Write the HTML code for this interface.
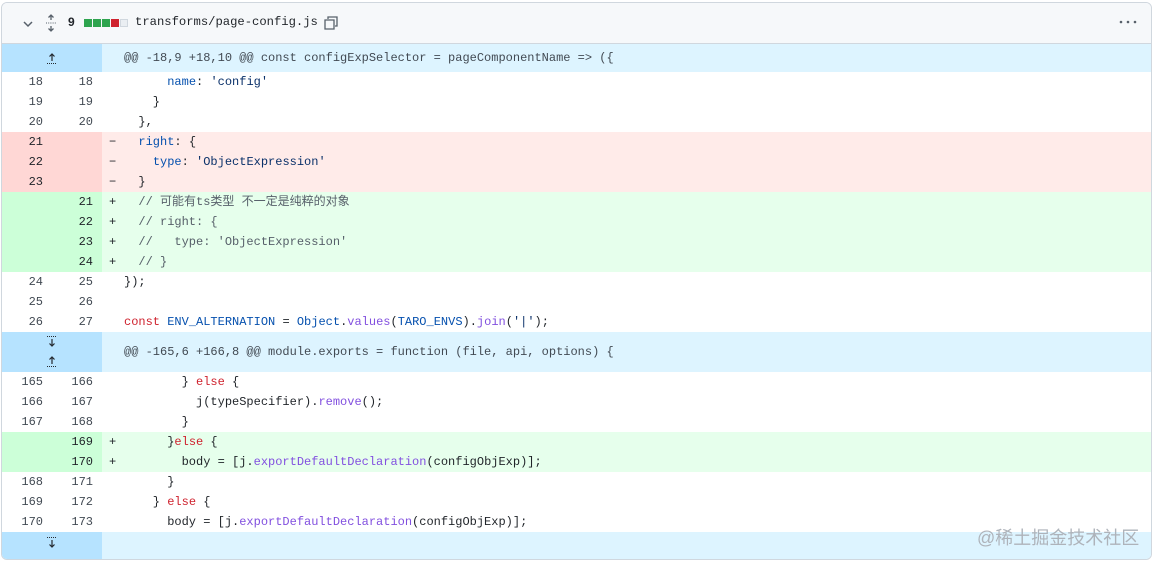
<!DOCTYPE html>
<html><head><meta charset="utf-8"><style>
*{margin:0;padding:0;box-sizing:border-box}
body{width:1155px;height:564px;background:#fff;position:relative;overflow:hidden;font-family:"Liberation Mono","Noto Sans CJK SC",monospace;font-size:12px;color:#1f2328}
.card{position:absolute;left:1px;top:2px;width:1151px;height:558px;border:1px solid #d0d7de;border-radius:6px;overflow:hidden}
.hdr{position:absolute;left:0;top:0;width:100%;height:41px;background:#f6f8fa;border-bottom:1px solid #d0d7de}
.row{position:absolute;left:0;width:100%;height:20px;line-height:20px;white-space:pre}
.n1,.n2{position:absolute;top:0;width:50px;height:100%;text-align:right;color:#424a53;padding-right:9px}
.n1{left:0}.n2{left:50px}
.m{position:absolute;left:107px;top:0}
.c{position:absolute;left:122px;top:0}
.del{background:#ffebe9}.del .n1,.del .n2{background:#ffd7d5;color:#1f2328}
.add{background:#e6ffec}.add .n1,.add .n2{background:#ccffd8;color:#1f2328}
.hunk{background:#ddf4ff;color:#424a53}
.hg{position:absolute;left:0;top:0;width:100px;height:100%;background:#b6e3ff}
.k{color:#cf222e}.s{color:#0a3069}.p{color:#0550ae}.f{color:#8250df}.cm{color:#57606a}
</style></head><body>
<div class="card">
<div class="hdr">
<svg style="position:absolute;left:20px;top:15px" width="12" height="12" viewBox="0 0 12 12"><path d="M2 4l4 4 4-4" fill="none" stroke="#57606a" stroke-width="1.5"/></svg>
<svg style="position:absolute;left:43px;top:10px" width="12" height="20" viewBox="0 0 12 20"><path d="M6 2v5M3.5 4.5L6 2l2.5 2.5M6 18v-5M3.5 15.5L6 18l2.5-2.5" fill="none" stroke="#57606a" stroke-width="1.3"/><path d="M1 10h10" stroke="#57606a" stroke-dasharray="1 1.2"/></svg>
<span style="position:absolute;left:66px;top:12px;font-family:'Liberation Sans',sans-serif;font-weight:bold;font-size:12px;color:#1f2328">9</span>
<div style="position:absolute;left:82px;top:16px;display:flex;gap:1px">
<i style="width:8px;height:8px;background:#2da44e"></i><i style="width:8px;height:8px;background:#2da44e"></i><i style="width:8px;height:8px;background:#2da44e"></i><i style="width:8px;height:8px;background:#cf222e"></i><i style="width:8px;height:8px;background:#eaeef2;border:1px solid #d0d7de"></i></div>
<span style="position:absolute;left:133px;top:12px;font-size:12.2px">transforms/page-config.js</span>
<svg style="position:absolute;left:321px;top:12px" width="16" height="16" viewBox="0 0 16 16"><path d="M5 4V2h9v9h-2M2 5h9v9H2z" fill="none" stroke="#57606a" stroke-width="1.3"/></svg>
<svg style="position:absolute;left:1117px;top:17px" width="18" height="4"><circle cx="2" cy="2" r="1.3" fill="#57606a"/><circle cx="9" cy="2" r="1.3" fill="#57606a"/><circle cx="16" cy="2" r="1.3" fill="#57606a"/></svg>
</div>
<div class="row hunk" style="top:41px;height:28px;line-height:28px"><div class="hg"><svg style="position:absolute;left:44px;top:6px" width="12" height="16"><path d="M6 11V4M3.5 6.5L6 4l2.5 2.5" fill="none" stroke="#24292f" stroke-width="1.2"/><path d="M1 13.5h10" stroke="#24292f" stroke-dasharray="1 1"/></svg></div><span class="c">@@ -18,9 +18,10 @@ const configExpSelector = pageComponentName => ({</span></div>
<div class="row" style="top:69px"><span class="n1">18</span><span class="n2">18</span><span class="c">      <span class="p">name</span>: <span class="s">'config'</span></span></div>
<div class="row" style="top:89px"><span class="n1">19</span><span class="n2">19</span><span class="c">    }</span></div>
<div class="row" style="top:109px"><span class="n1">20</span><span class="n2">20</span><span class="c">  },</span></div>
<div class="row del" style="top:129px"><span class="n1">21</span><span class="n2"></span><span class="m">−</span><span class="c">  <span class="p">right</span>: {</span></div>
<div class="row del" style="top:149px"><span class="n1">22</span><span class="n2"></span><span class="m">−</span><span class="c">    <span class="p">type</span>: <span class="s">'ObjectExpression'</span></span></div>
<div class="row del" style="top:169px"><span class="n1">23</span><span class="n2"></span><span class="m">−</span><span class="c">  }</span></div>
<div class="row add" style="top:189px"><span class="n1"></span><span class="n2">21</span><span class="m">+</span><span class="c cm">  // 可能有ts类型 不一定是纯粹的对象</span></div>
<div class="row add" style="top:209px"><span class="n1"></span><span class="n2">22</span><span class="m">+</span><span class="c cm">  // right: {</span></div>
<div class="row add" style="top:229px"><span class="n1"></span><span class="n2">23</span><span class="m">+</span><span class="c cm">  //   type: 'ObjectExpression'</span></div>
<div class="row add" style="top:249px"><span class="n1"></span><span class="n2">24</span><span class="m">+</span><span class="c cm">  // }</span></div>
<div class="row" style="top:269px"><span class="n1">24</span><span class="n2">25</span><span class="c">});</span></div>
<div class="row" style="top:289px"><span class="n1">25</span><span class="n2">26</span><span class="c"></span></div>
<div class="row" style="top:309px"><span class="n1">26</span><span class="n2">27</span><span class="c"><span class="k">const</span> <span class="p">ENV_ALTERNATION</span> = <span class="p">Object</span>.<span class="f">values</span>(<span class="p">TARO_ENVS</span>).<span class="f">join</span>(<span class="s">'|'</span>);</span></div>
<div class="row hunk" style="top:329px;height:40px;line-height:40px"><div class="hg"><svg style="position:absolute;left:44px;top:3px" width="12" height="34"><path d="M1 1.5h10" stroke="#24292f" stroke-dasharray="1 1"/><path d="M6 4v7M3.5 8.5L6 11l2.5-2.5" fill="none" stroke="#24292f" stroke-width="1.2"/><path d="M6 29v-7M3.5 24.5L6 22l2.5 2.5" fill="none" stroke="#24292f" stroke-width="1.2"/><path d="M1 31.5h10" stroke="#24292f" stroke-dasharray="1 1"/></svg></div><span class="c">@@ -165,6 +166,8 @@ module.exports = function (file, api, options) {</span></div>
<div class="row" style="top:369px"><span class="n1">165</span><span class="n2">166</span><span class="c">        } <span class="k">else</span> {</span></div>
<div class="row" style="top:389px"><span class="n1">166</span><span class="n2">167</span><span class="c">          j(typeSpecifier).<span class="f">remove</span>();</span></div>
<div class="row" style="top:409px"><span class="n1">167</span><span class="n2">168</span><span class="c">        }</span></div>
<div class="row add" style="top:429px"><span class="n1"></span><span class="n2">169</span><span class="m">+</span><span class="c">      }<span class="k">else</span> {</span></div>
<div class="row add" style="top:449px"><span class="n1"></span><span class="n2">170</span><span class="m">+</span><span class="c">        body = [j.<span class="f">exportDefaultDeclaration</span>(configObjExp)];</span></div>
<div class="row" style="top:469px"><span class="n1">168</span><span class="n2">171</span><span class="c">      }</span></div>
<div class="row" style="top:489px"><span class="n1">169</span><span class="n2">172</span><span class="c">    } <span class="k">else</span> {</span></div>
<div class="row" style="top:509px"><span class="n1">170</span><span class="n2">173</span><span class="c">      body = [j.<span class="f">exportDefaultDeclaration</span>(configObjExp)];</span></div>
<div class="row hunk" style="top:529px;height:30px"><div class="hg"><svg style="position:absolute;left:44px;top:4px" width="12" height="16"><path d="M1 1.5h10" stroke="#24292f" stroke-dasharray="1 1"/><path d="M6 4v7M3.5 8.5L6 11l2.5-2.5" fill="none" stroke="#24292f" stroke-width="1.2"/></svg></div></div>
</div>
<div style="position:absolute;left:977px;top:524px;font-family:'Liberation Sans','Noto Sans CJK SC',sans-serif;font-size:18px;color:#aeb3ba">@稀土掘金技术社区</div>
</body></html>
